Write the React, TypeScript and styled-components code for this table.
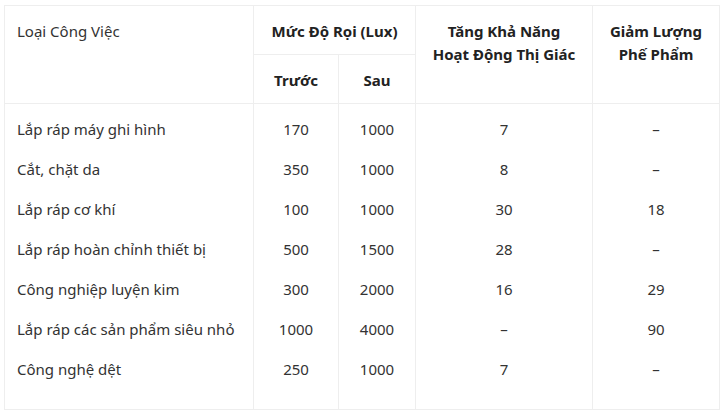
import React from 'react';
import styled, {createGlobalStyle} from 'styled-components';

const GlobalStyle = createGlobalStyle`
	html, body {
		margin: 0;
		padding: 0;
		background: #fff;
	}
	body {
		font-family: 'Noto Sans', 'Open Sans', sans-serif;
		font-size: 15px;
		color: #333;
	}
`;

type Row = {
	name: string;
	before: string;
	after: string;
	visual: string;
	waste: string;
};

const rows: Row[] = [
	{name: 'Lắp ráp máy ghi hình', before: '170', after: '1000', visual: '7', waste: '–'},
	{name: 'Cắt, chặt da', before: '350', after: '1000', visual: '8', waste: '–'},
	{name: 'Lắp ráp cơ khí', before: '100', after: '1000', visual: '30', waste: '18'},
	{name: 'Lắp ráp hoàn chỉnh thiết bị', before: '500', after: '1500', visual: '28', waste: '–'},
	{name: 'Công nghiệp luyện kim', before: '300', after: '2000', visual: '16', waste: '29'},
	{name: 'Lắp ráp các sản phẩm siêu nhỏ', before: '1000', after: '4000', visual: '–', waste: '90'},
	{name: 'Công nghệ dệt', before: '250', after: '1000', visual: '7', waste: '–'},
];

const App = () => {
	return (
		<>
			<GlobalStyle />
			<Page>
				<Table>
					<colgroup>
						<col style={{width: 249}} />
						<col style={{width: 85}} />
						<col style={{width: 77}} />
						<col style={{width: 177}} />
						<col style={{width: 127}} />
					</colgroup>
					<thead>
						<tr>
							<HeadCell rowSpan={2} $plain $left>
								Loại Công Việc
							</HeadCell>
							<HeadCell colSpan={2}>Mức Độ Rọi (Lux)</HeadCell>
							<HeadCell rowSpan={2}>
								Tăng Khả Năng
								<br />
								Hoạt Động Thị Giác
							</HeadCell>
							<HeadCell rowSpan={2}>
								Giảm Lượng
								<br />
								Phế Phẩm
							</HeadCell>
						</tr>
						<tr>
							<HeadCell>Trước</HeadCell>
							<HeadCell>Sau</HeadCell>
						</tr>
					</thead>
					<tbody>
						{rows.map((r, i) => (
							<BodyRow key={r.name} $first={i === 0} $last={i === rows.length - 1}>
								<Cell $left>{r.name}</Cell>
								<Cell>{r.before}</Cell>
								<Cell>{r.after}</Cell>
								<Cell>{r.visual}</Cell>
								<Cell>{r.waste}</Cell>
							</BodyRow>
						))}
					</tbody>
				</Table>
			</Page>
		</>
	);
};

export default App;

const Page = styled.div`
	padding: 5px 4px;
`;

const Table = styled.table`
	border-collapse: collapse;
	table-layout: fixed;
	width: 716px;
	border: 1px solid #eeeeee;
`;

const HeadCell = styled.th<{$plain?: boolean; $left?: boolean}>`
	border: 1px solid #eeeeee;
	padding: 14px 12px 11px;
	line-height: 23px;
	vertical-align: top;
	text-align: ${(p) => (p.$left ? 'left' : 'center')};
	font-weight: ${(p) => (p.$plain ? 400 : 700)};
	color: ${(p) => (p.$plain ? '#333' : '#222')};
`;

const BodyRow = styled.tr<{$first?: boolean; $last?: boolean}>`
	td {
		padding-top: ${(p) => (p.$first ? '15px' : '10px')};
		padding-bottom: ${(p) => (p.$last ? '30px' : '10px')};
	}
`;

const Cell = styled.td<{$left?: boolean}>`
	border-left: 1px solid #eeeeee;
	border-right: 1px solid #eeeeee;
	padding-left: 12px;
	padding-right: 12px;
	line-height: 20px;
	text-align: ${(p) => (p.$left ? 'left' : 'center')};
	color: #333;
`;
